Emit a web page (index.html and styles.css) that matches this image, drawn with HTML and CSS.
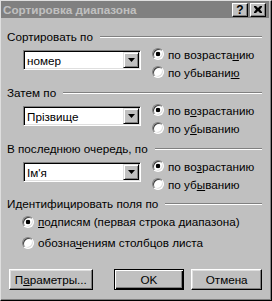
FILE: index.html
```html
<!DOCTYPE html>
<html lang="ru">
<head>
<meta charset="UTF-8" />
<title>Сортировка диапазона</title>
<link rel="stylesheet" href="styles.css">
</head>
<body>
<div class="window">
	<div class="titlebar">
		<span class="title">Сортировка диапазона</span>
		<span class="cap-btn">?</span>
		<span class="cap-btn close">
			<svg width="8" height="7" viewBox="0 0 8 7"><path d="M0 0h2l2 2 2-2h2v1L6 3.5 8 6v1H6L4 5 2 7H0V6l2-2.5L0 1z" fill="#000"/></svg>
		</span>
	</div>

	<div class="content">
		<div class="group-head"><span>Сортировать по</span><i class="etch"></i></div>
		<div class="sort-row">
			<div class="combo"><span class="combo-text">номер</span><span class="drop"><svg width="7" height="4" viewBox="0 0 7 4"><path d="M0 0h7L3.5 4z" fill="#000"/></svg></span></div>
			<div class="radios">
				<label class="radio"><span class="dot checked"></span><span>по возраста<u>н</u>ию</span></label>
				<label class="radio"><span class="dot"></span><span>по убывани<u>ю</u></span></label>
			</div>
		</div>

		<div class="group-head"><span>Затем по</span><i class="etch"></i></div>
		<div class="sort-row">
			<div class="combo"><span class="combo-text">Прізвище</span><span class="drop"><svg width="7" height="4" viewBox="0 0 7 4"><path d="M0 0h7L3.5 4z" fill="#000"/></svg></span></div>
			<div class="radios">
				<label class="radio"><span class="dot checked"></span><span>по в<u>о</u>зрастанию</span></label>
				<label class="radio"><span class="dot"></span><span>по у<u>б</u>ыванию</span></label>
			</div>
		</div>

		<div class="group-head"><span>В последнюю очередь, по</span><i class="etch"></i></div>
		<div class="sort-row">
			<div class="combo"><span class="combo-text">Ім'я</span><span class="drop"><svg width="7" height="4" viewBox="0 0 7 4"><path d="M0 0h7L3.5 4z" fill="#000"/></svg></span></div>
			<div class="radios">
				<label class="radio"><span class="dot checked"></span><span>по во<u>з</u>растанию</span></label>
				<label class="radio"><span class="dot"></span><span>по уб<u>ы</u>ванию</span></label>
			</div>
		</div>

		<div class="group-head last"><span>Идентифицировать поля по</span><i class="etch"></i></div>
		<div class="ident">
			<label class="radio tall"><span class="dot checked"></span><span><u>п</u>одписям (первая строка диапазона)</span></label>
			<label class="radio tall"><span class="dot"></span><span>обозна<u>ч</u>ениям столбцов листа</span></label>
		</div>

		<div class="buttons">
			<span class="btn params"><span>П<u>а</u>раметры...</span></span>
			<span class="btn default">OK</span>
			<span class="btn cancel">Отмена</span>
		</div>
	</div>
</div>
</body>
</html>
```

FILE: styles.css
```css
* {
	margin: 0;
	padding: 0;
	box-sizing: border-box;
}

body {
	background: #c0c0c0;
	font: 11.7px "Liberation Sans", Arial, sans-serif;
	color: #000;
}

u {
	text-decoration: underline;
	text-underline-offset: 1px;
}

.window {
	width: 272px;
	height: 301px;
	padding-right: 2px;
	background: #c0c0c0;
	border-top: 1px solid #dfdfdf;
	border-left: 1px solid #dfdfdf;
	border-right: 1px solid #000;
	border-bottom: 1px solid #000;
	box-shadow: inset -1px -1px #808080;
}

.titlebar {
	display: flex;
	align-items: center;
	height: 17px;
	padding: 0 3px 0 2px;
	background: #808080;
}

.title {
	flex: 1;
	font-weight: bold;
	color: #c0c0c0;
}

.cap-btn {
	display: flex;
	align-items: center;
	justify-content: center;
	width: 16px;
	height: 14px;
	font-weight: bold;
	font-size: 12px;
	background: #c0c0c0;
	border-top: 1px solid #fff;
	border-left: 1px solid #fff;
	border-right: 1px solid #000;
	border-bottom: 1px solid #000;
	box-shadow: inset -1px -1px #808080;
}

.cap-btn.close {
	margin-left: 2px;
}

.content {
	padding: 0 7px 0 6px;
}

.group-head {
	display: flex;
	align-items: center;
	gap: 7px;
	height: 13px;
	line-height: 13px;
	margin-top: 5px;
}

.group-head:first-child {
	margin-top: 12px;
}

.group-head.last {
	margin-top: 4px;
}

.etch {
	flex: 1;
	height: 2px;
	border-top: 1px solid #808080;
	border-bottom: 1px solid #fff;
}

.sort-row {
	display: flex;
	align-items: flex-start;
	margin-top: 2px;
	height: 36px;
}

.combo {
	display: flex;
	width: 118px;
	height: 20px;
	margin: 5px 0 0 16px;
	padding: 1px;
	background: #fff;
	border-top: 1px solid #808080;
	border-left: 1px solid #808080;
	border-right: 1px solid #fff;
	border-bottom: 1px solid #fff;
	box-shadow: inset 1px 1px #000, inset -1px -1px #dfdfdf;
}

.combo-text {
	flex: 1;
	padding: 2px 0 0 2px;
	line-height: 13px;
}

.drop {
	display: flex;
	align-items: center;
	justify-content: center;
	width: 16px;
	height: 16px;
	background: #c0c0c0;
	border-top: 1px solid #dfdfdf;
	border-left: 1px solid #dfdfdf;
	border-right: 1px solid #000;
	border-bottom: 1px solid #000;
	box-shadow: inset 1px 1px #fff, inset -1px -1px #808080;
}

.radios {
	display: flex;
	flex-direction: column;
	margin-left: 11px;
}

.radio {
	display: flex;
	align-items: center;
	gap: 4px;
	height: 18px;
	white-space: nowrap;
}

.radio.tall {
	height: 21px;
}

.dot {
	flex: none;
	width: 12px;
	height: 12px;
	border-radius: 50%;
	background: #fff;
	border: 1px solid;
	border-color: #808080 #fff #fff #808080;
	box-shadow: inset 1px 1px #404040, inset -1px -1px #dfdfdf;
}

.dot.checked {
	background: radial-gradient(circle, #000 0 2px, #fff 2.6px);
}

.ident {
	margin: 1px 0 0 15px;
}

.buttons {
	display: flex;
	margin: 16px 0 0 2px;
}

.btn {
	display: flex;
	align-items: center;
	justify-content: center;
	height: 21px;
	background: #c0c0c0;
	border-top: 1px solid #fff;
	border-left: 1px solid #fff;
	border-right: 1px solid #000;
	border-bottom: 1px solid #000;
	box-shadow: inset -1px -1px #808080, inset 1px 1px #dfdfdf;
}

.btn.params {
	width: 84px;
}

.btn.default {
	width: 71px;
	margin-left: 21px;
	border: 1px solid #000;
	box-shadow: inset 1px 1px #fff, inset -1px -1px #000, inset -2px -2px #808080;
}

.btn.cancel {
	width: 71px;
	margin-left: 7px;
}
```
